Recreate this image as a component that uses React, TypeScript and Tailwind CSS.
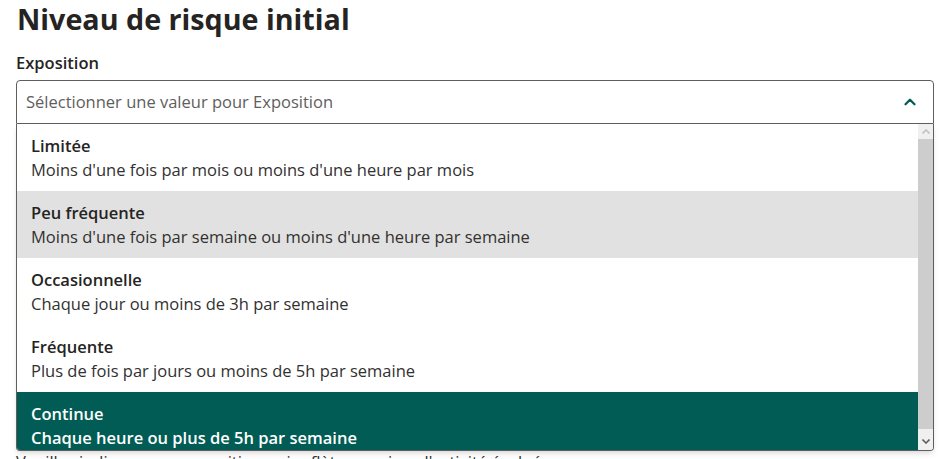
import { ChevronUp } from 'lucide-react';

const options = [
  { title: 'Limitée', text: "Moins d'une fois par mois ou moins d'une heure par mois" },
  { title: 'Peu fréquente', text: "Moins d'une fois par semaine ou moins d'une heure par semaine", hover: true },
  { title: 'Occasionnelle', text: 'Chaque jour ou moins de 3h par semaine' },
  { title: 'Fréquente', text: 'Plus de fois par jours ou moins de 5h par semaine' },
  { title: 'Continue', text: 'Chaque heure ou plus de 5h par semaine', selected: true },
];

function Scrollbar() {
  return (
    <div className="flex w-[15px] shrink-0 flex-col bg-[#cdcdcd]">
      <div className="flex h-[15px] items-center justify-center bg-[#f0f0f0]">
        <svg width="8" height="5" viewBox="0 0 8 5">
          <path d="M0.5 4.5 L4 1 L7.5 4.5" fill="none" stroke="#c2c2c2" strokeWidth="1.6" />
        </svg>
      </div>
      <div className="flex-1" />
      <div className="flex h-[21px] items-center justify-center bg-[#f0f0f0] pt-[4px]">
        <svg width="8" height="5" viewBox="0 0 8 5">
          <path d="M0.5 0.5 L4 4 L7.5 0.5" fill="none" stroke="#606060" strokeWidth="1.6" />
        </svg>
      </div>
    </div>
  );
}

export default function App() {
  return (
    <div
      className="h-[459px] w-[942px] overflow-hidden bg-white pl-[16px] pr-[8px] text-[#323130]"
      style={{ fontFamily: "'Open Sans', 'Noto Sans', sans-serif" }}
    >
      <h1 className="ml-[1px] pt-[1px] text-[28.7px] font-bold leading-[36px] text-[#252423]">Niveau de risque initial</h1>
      <div className="mt-[14px] mb-[5px] text-[16.5px] font-semibold leading-[24px] text-[#252423]">Exposition</div>

      <div className="relative">
        <div className="flex h-[44px] items-center justify-between rounded-t-[4px] border border-[#605e5c] pl-[9px] pr-[14px]">
          <span className="text-[16.5px] text-[#605e5c]">Sélectionner une valeur pour Exposition</span>
          <ChevronUp className="h-[18px] w-[18px] text-[#005c55]" strokeWidth={3} />
        </div>

        {/* dropdown menu */}
        <div className="absolute left-0 right-0 top-[44px] z-10 flex h-[327px] overflow-hidden rounded-b-[4px] border-x border-b border-[#605e5c] bg-white shadow-md">
          <div className="flex-1 overflow-hidden">
            {options.map((o) => (
              <div
                key={o.title}
                className={
                  'h-[67px] px-[14px] pt-[10px] text-[16.5px] leading-[24px] ' +
                  (o.selected ? 'bg-[#005c55] text-white' : o.hover ? 'bg-[#e1e1e1]' : 'bg-white')
                }
              >
                <div className={'font-semibold ' + (o.selected ? '' : 'text-[#252423]')}>{o.title}</div>
                <div className={o.selected ? 'font-semibold' : ''}>{o.text}</div>
              </div>
            ))}
          </div>
          <Scrollbar />
        </div>

        <p className="mt-[326px] text-[16.5px] leading-[24px]">
          Veuillez indiquer une exposition qui reflète au mieux l'activité évaluée
        </p>
      </div>
    </div>
  );
}
